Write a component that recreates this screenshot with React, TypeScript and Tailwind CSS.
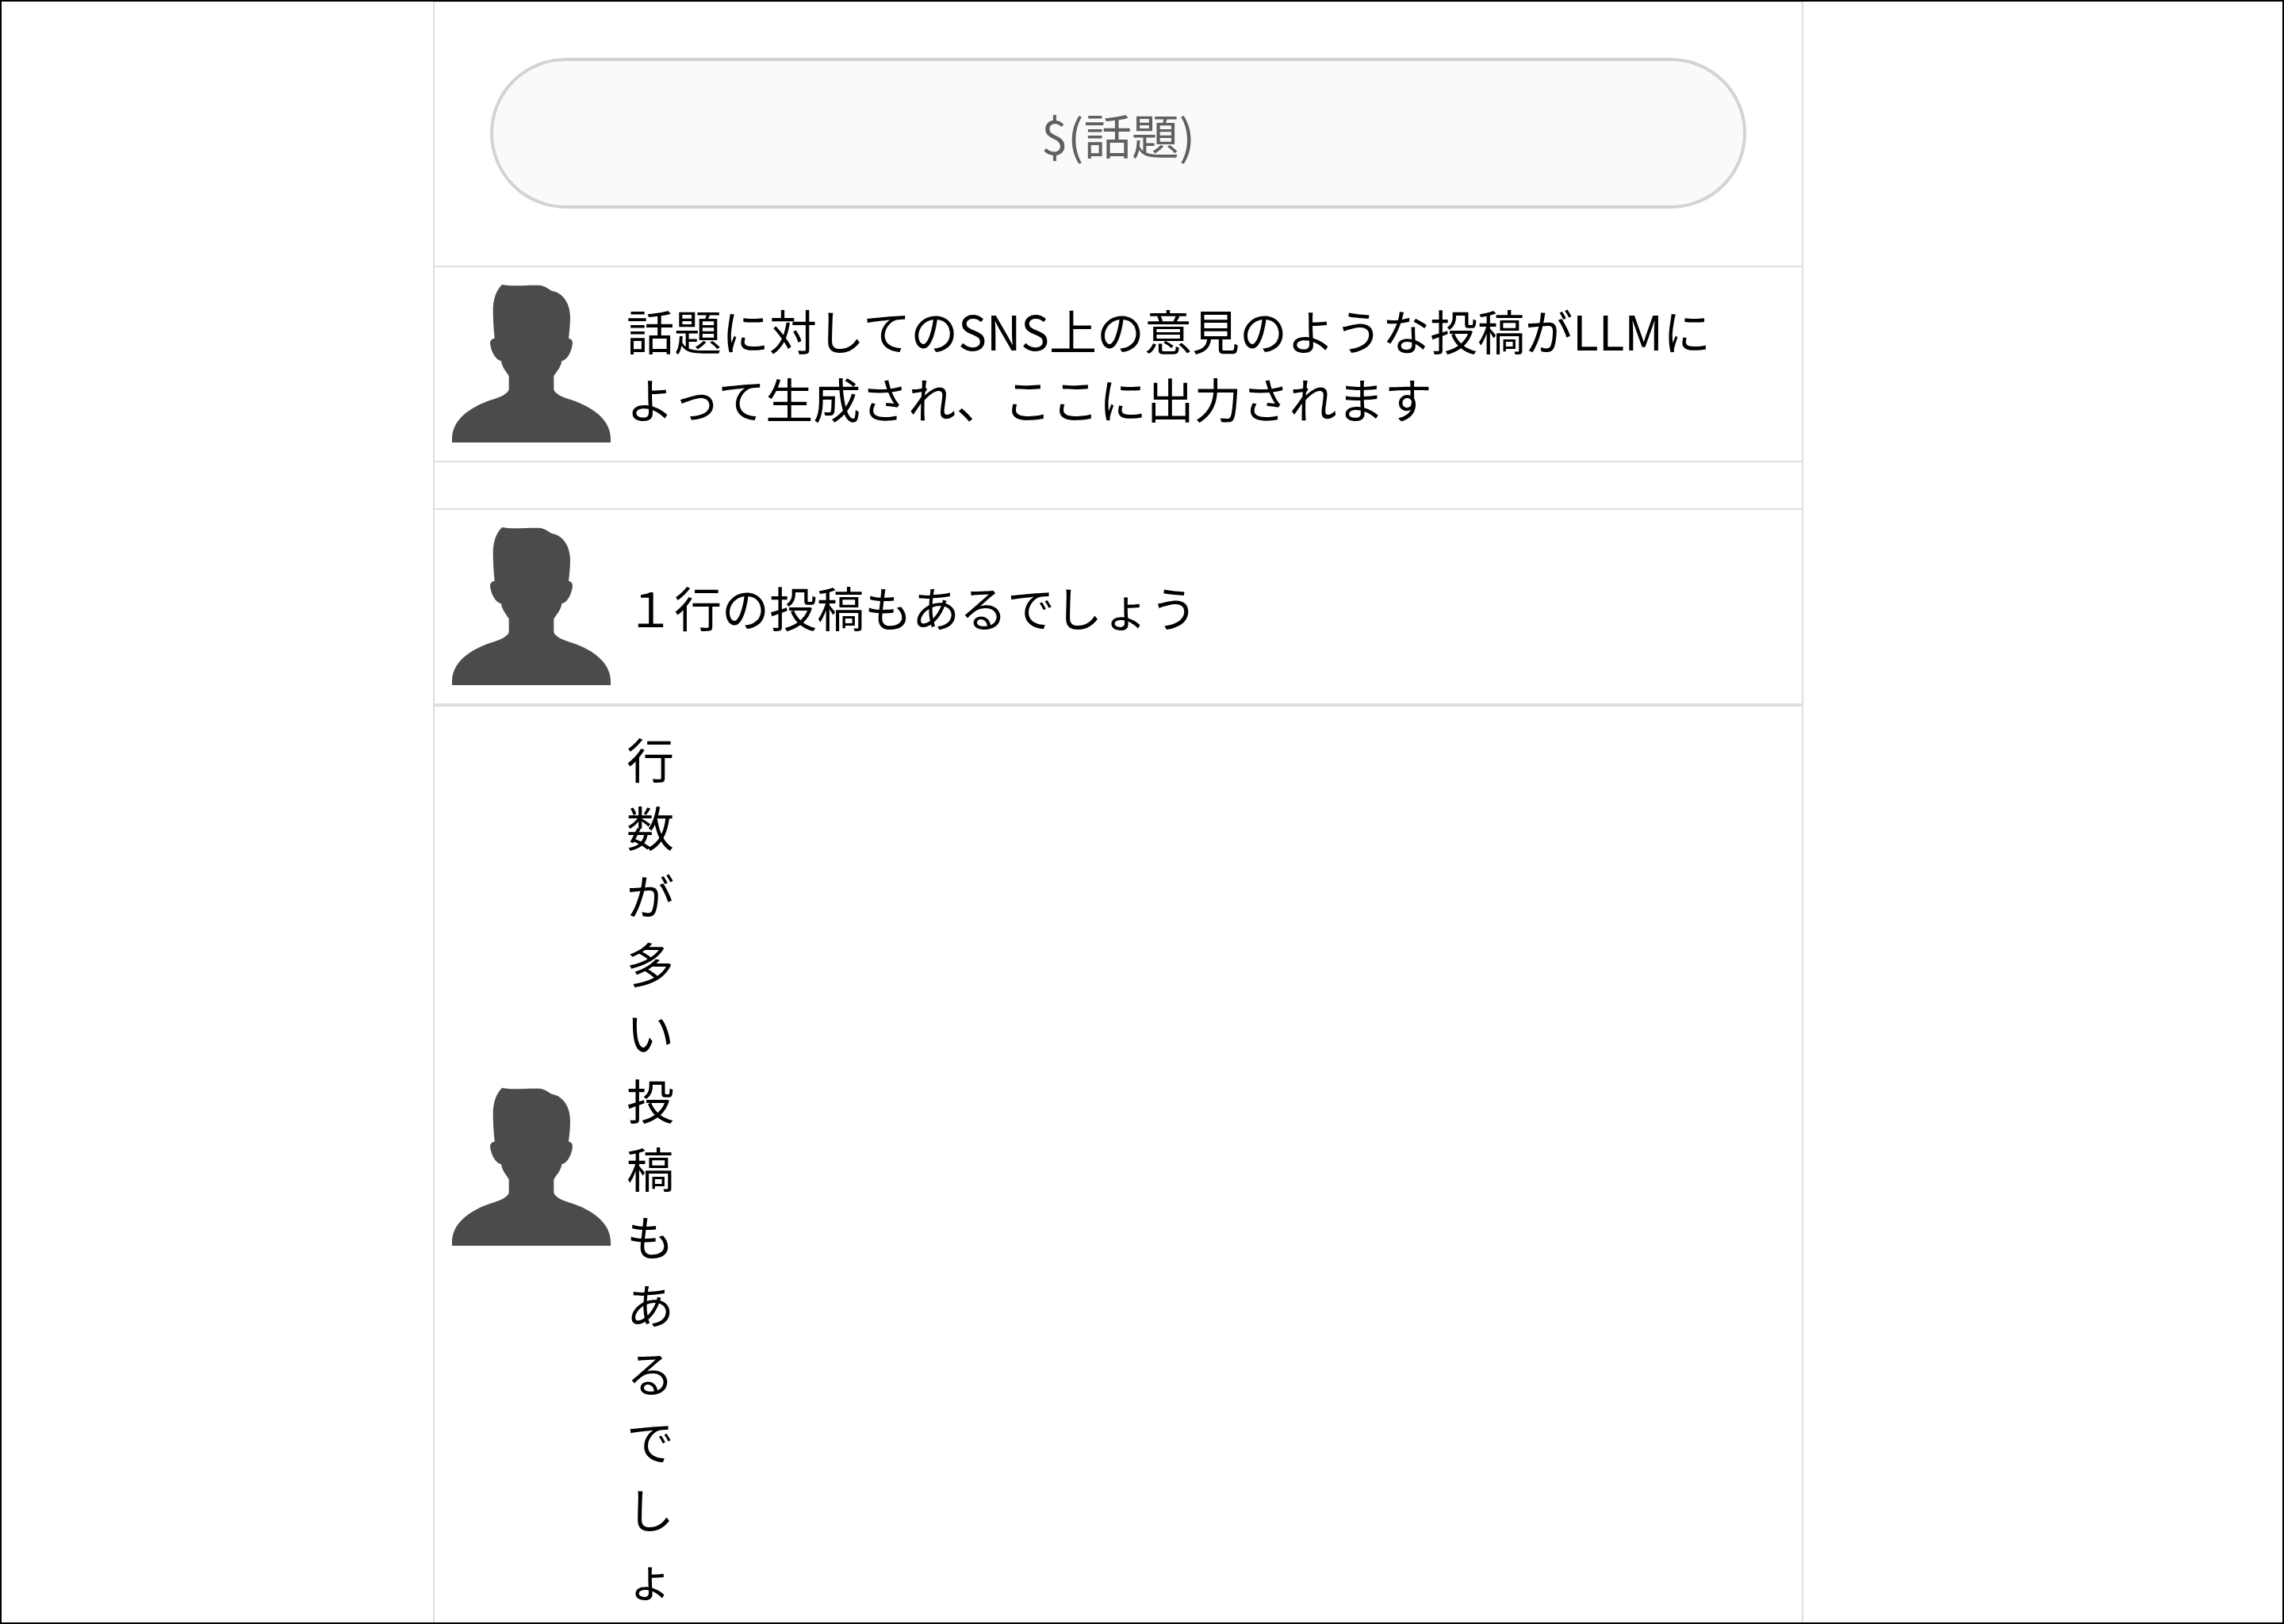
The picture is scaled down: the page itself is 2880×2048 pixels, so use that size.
type Post = { id: number; text: string; spaced?: boolean; narrow?: boolean };

const posts: Post[] = [
  {
    id: 1,
    text: "話題に対してのSNS上の意見のような投稿がLLMによって生成され、ここに出力されます",
    spaced: true,
  },
  { id: 2, text: "１行の投稿もあるでしょう" },
  { id: 3, text: "行数が多い投稿もあるでしょ", narrow: true },
];

function Avatar() {
  return (
    <svg viewBox="0 0 600 600" className="size-[200px] shrink-0 fill-[#4b4b4b]" aria-hidden="true">
      <path d="M189 0C230 8 280 1 328 2C352 4 362 14 378 24C412 28 447 62 447 125C447 150 444 178 441 203C450 204 456 211 456 222C453 250 438 284 415 289C412 312 398 326 385 346V397C391 415 420 426 441 433C505 452 600 497 600 584V597H0V584C0 497 95 452 159 433C180 426 209 415 215 397V346C203 326 189 312 186 289C163 284 147 250 144 222C144 211 151 204 161 203C157 165 155 130 155 90C157 55 166 22 189 0Z" />
    </svg>
  );
}

function PostCard({ post }: { post: Post }) {
  return (
    <article
      className={`flex items-center gap-5 border-y-2 border-[#dedede] p-[22px] ${post.spaced ? "mb-[58px]" : ""}`}
    >
      <Avatar />
      <p className={post.narrow ? "w-[60px] break-all [line-break:anywhere]" : "min-w-0 flex-1 [line-break:strict]"}>
        {post.text}
      </p>
    </article>
  );
}

export default function App() {
  return (
    <div
      lang="ja"
      className="h-screen overflow-hidden border-2 border-black bg-white pr-[60px] font-['Noto_Sans_CJK_JP',sans-serif] text-[60px] leading-[86px] text-black"
    >
      <main className="mx-auto -mt-px w-[60vw] border-2 border-[#dedede]">
        <div className="px-[70px] pt-[70px] pb-[72px]">
          <input
            type="text"
            aria-label="話題"
            placeholder="$(話題)"
            className="block h-[190px] w-full rounded-full border-4 border-[#d3d3d3] bg-[#fafafa] px-12 text-center placeholder:text-[#606060] placeholder:opacity-100"
          />
        </div>
        {posts.map((post) => (
          <PostCard key={post.id} post={post} />
        ))}
      </main>
    </div>
  );
}
